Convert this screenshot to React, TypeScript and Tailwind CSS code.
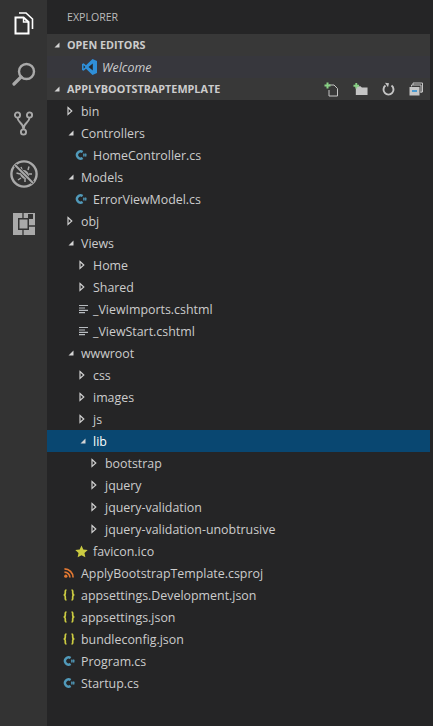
import React from "react";

const Chevron = ({ open }: { open: boolean }) =>
  open ? (
    <svg width="8" height="8" viewBox="0 0 8 8" className="shrink-0"><path d="M1.5 6.5 L6.5 1.5 L6.5 6.5 Z" fill="#d4d4d4" /></svg>
  ) : (
    <svg width="6" height="10" viewBox="0 0 6 10" className="shrink-0"><path d="M1 1.5 L4.8 5 L1 8.5 Z" fill="none" stroke="#cfcfcf" strokeWidth="1.2" /></svg>
  );

const CsIcon = () => (
  <svg width="12" height="12" viewBox="0 0 12 12" className="shrink-0">
    <path d="M7.6 3 A3.6 3.6 0 1 0 7.6 9" fill="none" stroke="#519aba" strokeWidth="2.4" />
    <path d="M8.8 4.5 v3 M10.5 4.5 v3 M8 5.3 h3.8 M8 6.8 h3.8" stroke="#519aba" strokeWidth="0.8" />
  </svg>
);
const LinesIcon = () => (
  <svg width="10" height="10" viewBox="0 0 10 10" className="shrink-0">
    <path d="M0 1.5 h9 M0 4 h6 M0 6.3 h9 M0 8.7 h6" stroke="#b8bcc0" strokeWidth="1.2" />
  </svg>
);
const StarIcon = () => (
  <svg width="13" height="13" viewBox="0 0 24 24" className="shrink-0"><path d="M12 1 L15.4 8.4 L23.5 9.3 L17.5 14.8 L19.1 22.8 L12 18.8 L4.9 22.8 L6.5 14.8 L0.5 9.3 L8.6 8.4 Z" fill="#cbcb41" /></svg>
);
const RssIcon = () => (
  <svg width="10" height="10" viewBox="0 0 11 11" className="shrink-0">
    <circle cx="2" cy="9" r="1.8" fill="#e37933" />
    <path d="M0.5 4.5 A6 6 0 0 1 6.5 10.5 M0.5 1 A9.5 9.5 0 0 1 10 10.5" fill="none" stroke="#e37933" strokeWidth="1.8" />
  </svg>
);
const JsonIcon = () => (
  <svg width="12" height="12" viewBox="0 0 12 12" className="shrink-0" fill="none" stroke="#cbcb41" strokeWidth="1.7">
    <path d="M3.5 1 C2 1 2.3 2.5 2.3 4 C2.3 5.2 1.6 6 0.6 6 C1.6 6 2.3 6.8 2.3 8 C2.3 9.5 2 11 3.5 11" />
    <path d="M8.5 1 C10 1 9.7 2.5 9.7 4 C9.7 5.2 10.4 6 11.4 6 C10.4 6 9.7 6.8 9.7 8 C9.7 9.5 10 11 8.5 11" />
  </svg>
);
const VsIcon = () => (
  <svg width="15" height="16" viewBox="0 0 15 16" className="shrink-0">
    <path d="M10.5 0 L15 2 V14 L10.5 16 L4 9.8 L1.6 11.8 L0 11 V5 L1.6 4.2 L4 6.2 Z" fill="#2f8fd8" />
    <path d="M10.8 4.5 L6.5 8 L10.8 11.5 Z M1.6 6.2 V9.8 L3.4 8 Z" fill="#26282b" />
  </svg>
);

type Row = { t: string; pad: number; x: number; kind: "open" | "closed" | "cs" | "lines" | "star" | "rss" | "json"; sel?: boolean };

// pad = left edge of the icon slot, x = left edge of the label (both from the sidebar's edge)
const F = 34, S = 46, D = 58;
const rows: Row[] = [
  { t: "bin", pad: 20, x: F, kind: "closed" },
  { t: "Controllers", pad: 20, x: F, kind: "open" },
  { t: "HomeController.cs", pad: 28, x: S, kind: "cs" },
  { t: "Models", pad: 20, x: F, kind: "open" },
  { t: "ErrorViewModel.cs", pad: 28, x: S, kind: "cs" },
  { t: "obj", pad: 20, x: F, kind: "closed" },
  { t: "Views", pad: 20, x: F, kind: "open" },
  { t: "Home", pad: 32, x: S, kind: "closed" },
  { t: "Shared", pad: 32, x: S, kind: "closed" },
  { t: "_ViewImports.cshtml", pad: 32, x: S, kind: "lines" },
  { t: "_ViewStart.cshtml", pad: 32, x: S, kind: "lines" },
  { t: "wwwroot", pad: 20, x: F, kind: "open" },
  { t: "css", pad: 32, x: S, kind: "closed" },
  { t: "images", pad: 32, x: S, kind: "closed" },
  { t: "js", pad: 32, x: S, kind: "closed" },
  { t: "lib", pad: 32, x: S, kind: "open", sel: true },
  { t: "bootstrap", pad: 44, x: D, kind: "closed" },
  { t: "jquery", pad: 44, x: D, kind: "closed" },
  { t: "jquery-validation", pad: 44, x: D, kind: "closed" },
  { t: "jquery-validation-unobtrusive", pad: 44, x: D, kind: "closed" },
  { t: "favicon.ico", pad: 28, x: S, kind: "star" },
  { t: "ApplyBootstrapTemplate.csproj", pad: 17, x: F, kind: "rss" },
  { t: "appsettings.Development.json", pad: 16, x: F, kind: "json" },
  { t: "appsettings.json", pad: 16, x: F, kind: "json" },
  { t: "bundleconfig.json", pad: 16, x: F, kind: "json" },
  { t: "Program.cs", pad: 16, x: F, kind: "cs" },
  { t: "Startup.cs", pad: 16, x: F, kind: "cs" },
];

const iconFor = (k: Row["kind"]) => {
  switch (k) {
    case "open": return <Chevron open />;
    case "closed": return <Chevron open={false} />;
    case "cs": return <CsIcon />;
    case "lines": return <LinesIcon />;
    case "star": return <StarIcon />;
    case "rss": return <RssIcon />;
    case "json": return <JsonIcon />;
  }
};

export default function App() {
  return (
    <div className="flex w-[433px] h-[726px] overflow-hidden bg-[#252526] text-[12.4px] text-[#cccccc] [font-family:'Open_Sans','Noto_Sans',sans-serif]">
      <div className="w-[47px] shrink-0 bg-[#333333] flex flex-col items-center pt-[12px]">
        <svg width="20" height="23" viewBox="0 0 20 23" fill="none" stroke="#ffffff">
          <path d="M5 1 H12 L18.5 7 V17" strokeWidth="1.6" />
          <path d="M1.5 5.5 H9.5 L14.5 10 V21.5 H1.5 Z" strokeWidth="2" />
          <path d="M9.5 5.5 V10 H14.5" strokeWidth="1.4" />
        </svg>
        <svg width="24" height="24" viewBox="0 0 24 24" fill="none" stroke="#a9a9a9" className="mt-[27px]">
          <circle cx="14.5" cy="9.5" r="7.5" strokeWidth="2.4" />
          <path d="M9 15 L2 22" strokeWidth="3.2" strokeLinecap="round" />
        </svg>
        <svg width="19" height="25" viewBox="0 0 19 25" fill="none" stroke="#a9a9a9" strokeWidth="1.9" className="mt-[25px]">
          <circle cx="3.5" cy="4" r="2.6" />
          <circle cx="15.5" cy="4" r="2.6" />
          <circle cx="9.5" cy="21" r="2.6" />
          <path d="M3.5 6.6 C3.5 12 9.5 11 9.5 18.4 M15.5 6.6 C15.5 12 9.5 11 9.5 18.4" />
        </svg>
        <svg width="28" height="28" viewBox="0 0 28 28" fill="none" stroke="#a9a9a9" className="mt-[24px]">
          <circle cx="14" cy="14" r="12.6" strokeWidth="2.4" />
          <ellipse cx="14.5" cy="14.5" rx="4" ry="5" fill="#a9a9a9" stroke="none" transform="rotate(-45 14.5 14.5)" />
          <path d="M11 7 L12 10 M19 6.5 L18 10 M6.5 13 L10 14 M22 14 H19 M8 20 L11 18 M15 22 L15 19" strokeWidth="1.5" />
          <path d="M5 5 L23 23" stroke="#333333" strokeWidth="3.6" />
          <path d="M5 5 L23 23" strokeWidth="2" />
        </svg>
        <svg width="22" height="22" viewBox="0 0 22 22" className="mt-[25px]">
          <path d="M0 0 H22 V22 H0 Z" fill="#a9a9a9" />
          <path d="M10 0 V5 M10 17 V22 M16 13 H22" stroke="#333333" strokeWidth="1.3" />
          <path d="M15 1 H20 V6 H15 Z" fill="#333333" />
          <path d="M5 5 H16 V17 H5 Z" fill="#333333" />
          <path d="M6.5 6.5 H14.5 V15.5 H6.5 Z" fill="#a9a9a9" />
        </svg>
      </div>

      <div className="flex-1 min-w-0 flex flex-col pr-[3px]">
        <div className="h-[34px] shrink-0 flex items-center pt-[2px] pl-[20px] text-[10.6px] text-[#bbbbbb]">EXPLORER</div>

        <div className="h-[22px] shrink-0 bg-[#383838] flex items-center pl-[6px] gap-[6px] text-[10.8px] font-bold text-[#cccccc]">
          <Chevron open />
          <span>OPEN EDITORS</span>
        </div>
        <div className="h-[22px] shrink-0 bg-[#37373d] flex items-center pl-[35px] gap-[5px] italic">
          <VsIcon />
          <span className="pt-[2px]">Welcome</span>
        </div>
        <div className="h-[22px] shrink-0 bg-[#383838] flex items-center pl-[6px] gap-[6px] text-[10.8px] font-bold text-[#cccccc]">
          <Chevron open />
          <span className="flex-1">APPLYBOOTSTRAPTEMPLATE</span>
          <div className="flex items-center gap-[14px] pr-[7px]">
            <svg width="15" height="15" viewBox="0 0 15 15" fill="none">
              <path d="M5 3 H10 L13.5 6.5 V14 H5 V8" stroke="#c5c5c5" strokeWidth="1" />
              <path d="M3.5 0.5 V6.5 M0.5 3.5 H6.5" stroke="#89d185" strokeWidth="2" />
            </svg>
            <svg width="15" height="14" viewBox="0 0 16 14">
              <path d="M3 4 H8 L9.5 5.5 H15.5 V13.5 H3 Z" fill="#c5c5c5" />
              <path d="M3.5 0.5 V6.5 M0.5 3.5 H6.5" stroke="#89d185" strokeWidth="2" />
            </svg>
            <svg width="13" height="14" viewBox="0 0 13 14" fill="none">
              <path d="M3.5 3.6 A5 5 0 1 0 9.5 3.6" stroke="#c5c5c5" strokeWidth="1.9" />
              <path d="M3 0.8 L7 1.2 L6 5.2 Z" fill="#c5c5c5" />
            </svg>
            <svg width="14" height="14" viewBox="0 0 14 14" fill="none">
              <path d="M4 3 V1 H13.5 V10 H11.5 M2.5 4.5 V3 H12 V11" stroke="#c5c5c5" strokeWidth="1" />
              <path d="M0.5 5 H10.5 V13.5 H0.5 Z" fill="#c5c5c5" />
              <path d="M3 9 H8" stroke="#1f8ad2" strokeWidth="1.5" />
            </svg>
          </div>
        </div>

        {rows.map((r) => (
          <div
            key={r.t}
            className={`h-[22px] shrink-0 flex items-center ${r.sel ? "bg-[#094771] text-white" : ""}`}
          >
            <div className="flex items-center shrink-0" style={{ marginLeft: r.pad, width: r.x - r.pad }}>
              {iconFor(r.kind)}
            </div>
            <span className="whitespace-nowrap pt-[2px]">{r.t}</span>
          </div>
        ))}
      </div>
    </div>
  );
}
